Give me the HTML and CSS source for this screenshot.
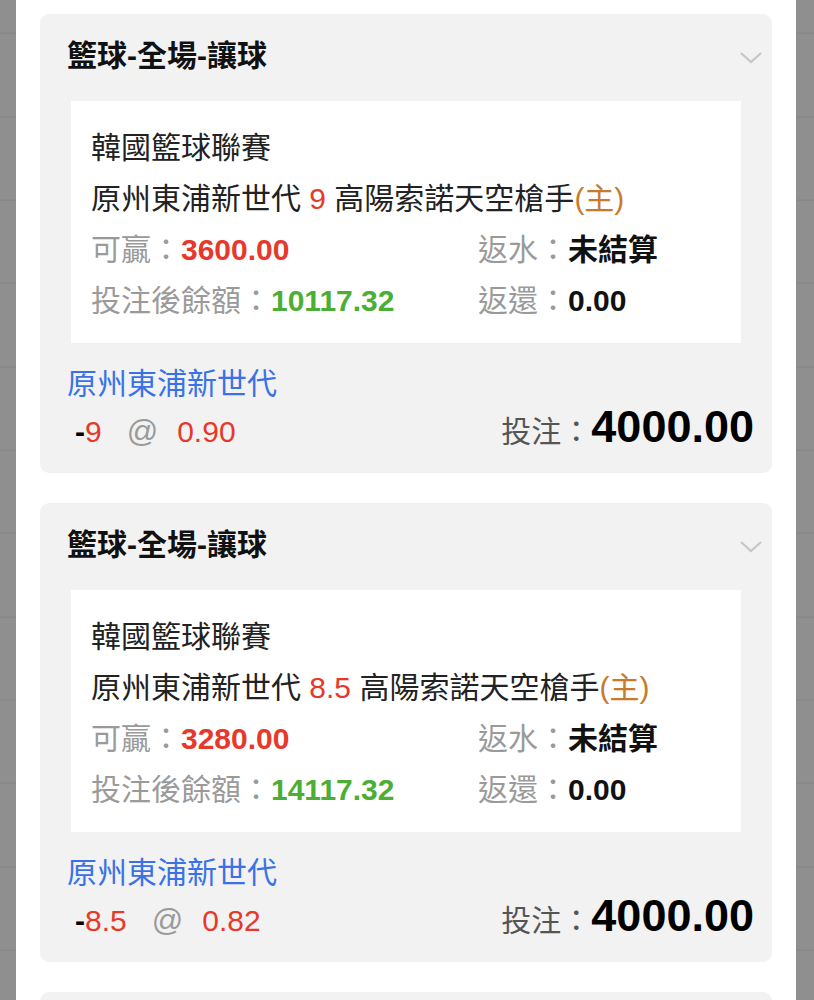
FILE: index.html
```html
<!DOCTYPE html>
<html lang="zh-Hant">
<head>
  <meta charset="UTF-8" />
  <title>注單明細</title>
  <link rel="stylesheet" href="styles.css">
</head>
<body>
  <div class="sheet">

    <div class="bet">
      <div class="bet-head">
        <h3>籃球-全場-讓球</h3>
        <svg class="chev" width="24" height="14" viewBox="0 0 24 14"><path d="M2 2 L12 11 L22 2" fill="none" stroke="#c6c6c6" stroke-width="2.2"/></svg>
      </div>
      <div class="bet-info">
        <div>韓國籃球聯賽</div>
        <div>原州東浦新世代 <span class="red">9</span> 高陽索諾天空槍手<span class="home">(主)</span></div>
        <div class="stats">
          <div><span class="lbl">可贏：</span><b class="red">3600.00</b></div>
          <div><span class="lbl">返水：</span><b>未結算</b></div>
          <div><span class="lbl">投注後餘額：</span><b class="green">10117.32</b></div>
          <div><span class="lbl">返還：</span><b>0.00</b></div>
        </div>
      </div>
      <div class="bet-foot">
        <div class="pick">原州東浦新世代</div>
        <div class="foot-row">
          <div class="odds"><b class="minus">-</b><span class="red">9</span><span class="at">@</span><span class="red">0.90</span></div>
          <div class="stake"><span class="stake-lbl">投注：</span><b>4000.00</b></div>
        </div>
      </div>
    </div>

    <div class="bet">
      <div class="bet-head">
        <h3>籃球-全場-讓球</h3>
        <svg class="chev" width="24" height="14" viewBox="0 0 24 14"><path d="M2 2 L12 11 L22 2" fill="none" stroke="#c6c6c6" stroke-width="2.2"/></svg>
      </div>
      <div class="bet-info">
        <div>韓國籃球聯賽</div>
        <div>原州東浦新世代 <span class="red">8.5</span> 高陽索諾天空槍手<span class="home">(主)</span></div>
        <div class="stats">
          <div><span class="lbl">可贏：</span><b class="red">3280.00</b></div>
          <div><span class="lbl">返水：</span><b>未結算</b></div>
          <div><span class="lbl">投注後餘額：</span><b class="green">14117.32</b></div>
          <div><span class="lbl">返還：</span><b>0.00</b></div>
        </div>
      </div>
      <div class="bet-foot">
        <div class="pick">原州東浦新世代</div>
        <div class="foot-row">
          <div class="odds"><b class="minus">-</b><span class="red">8.5</span><span class="at">@</span><span class="red">0.82</span></div>
          <div class="stake"><span class="stake-lbl">投注：</span><b>4000.00</b></div>
        </div>
      </div>
    </div>

    <div class="bet bet-stub"></div>

  </div>
</body>
</html>
```

FILE: styles.css
```css
html, body { margin: 0; height: 100%; overflow: hidden; }
body {
  font-family: "Liberation Sans", "Noto Sans CJK TC", sans-serif;
  color: #222;
  /* dimmed list behind the sheet */
  background-color: #8f8f8f;
  background-image: repeating-linear-gradient(180deg, transparent 0 82.33px, #848484 82.33px 83.33px);
  background-position: 0 -49.33px;
}

.sheet {
  margin: 0 18px 0 16px;
  background: #fff;
  min-height: 100%;
  padding: 14px 24px 0;
  box-sizing: border-box;
}

.bet {
  background: #f2f2f2;
  border-radius: 9px;
  margin-bottom: 30px;
}
.bet-stub { height: 60px; }

.bet-head {
  display: flex;
  align-items: center;
  justify-content: space-between;
  padding: 27px 9px 30px 27px;
}
.bet-head h3 { margin: 0; font-size: 30px; line-height: 30px; font-weight: bold; color: #111; }
.chev { display: block; margin-top: 4px; }

.bet-info {
  background: #fff;
  margin: 0 31px;
  padding: 21px 20px 17px;
  font-size: 30px;
  line-height: 51px;
  height: 242px;
  box-sizing: border-box;
}
.stats { display: grid; grid-template-columns: 387px 1fr; }
.lbl { color: #9a9a9a; }
.stats b { font-weight: bold; color: #111; }

.red { color: #e7392b; }
.stats b.red { color: #e7392b; }
.stats b.green { color: #4cae35; }
.home { color: #c77a2c; }

.bet-foot { padding: 17px 18px 17px 27px; font-size: 30px; }
.pick { color: #3a72e6; line-height: 48px; }
.foot-row {
  display: flex;
  justify-content: space-between;
  align-items: baseline;
  height: 48px;
  line-height: 48px;
}
.odds { padding-left: 8px; }
.minus { color: #000; }
.at { color: #9a9a9a; font-size: 31px; margin: 0 19px 0 25px; }
.stake-lbl { color: #555; }
.stake b { font-size: 45px; line-height: 37px; font-weight: bold; color: #000; }
```
